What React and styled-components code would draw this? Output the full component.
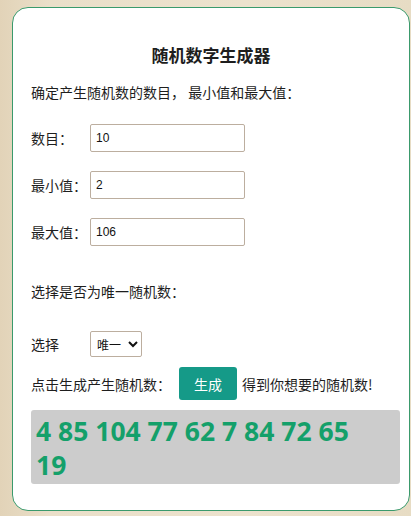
import React, { useState } from "react";
import styled, { createGlobalStyle } from "styled-components";

const Global = createGlobalStyle`
  html, body {
    margin: 0;
    padding: 0;
  }
  body {
    background: linear-gradient(90deg, #e2d3b8 0%, #eadfc9 12%, #ece2cd 60%, #e7dcc4 100%);
    font-family: "Noto Sans CJK SC", "Noto Sans", sans-serif;
    color: #1e1e1e;
    min-height: 516px;
  }
`;

const Page = styled.div`
  padding: 7px 1px 5px 12px;
`;

const Card = styled.div`
  box-sizing: border-box;
  width: 398px;
  height: 504px;
  background: #fff;
  border: 1px solid #3a9a6c;
  border-radius: 16px;
  padding: 35px 18px 0;
`;

const Title = styled.h2`
  margin: 0;
  font-size: 17px;
  line-height: 24px;
  font-weight: 700;
  text-align: center;
`;

const Text = styled.p`
  margin: ${(p) => p.$top || 0}px 0 0;
  font-size: 14px;
  line-height: 20px;
`;

const Row = styled.div`
  display: flex;
  align-items: center;
  margin-top: ${(p) => p.$top}px;
  font-size: 14px;
  white-space: nowrap;
`;

const Label = styled.span`
  width: 59px;
  flex: none;
`;

const Input = styled.input`
  box-sizing: border-box;
  width: 155px;
  height: 28px;
  border: 1px solid #bcae9f;
  border-radius: 2px;
  padding: 0 5px;
  font-family: "Liberation Sans", Arial, sans-serif;
  font-size: 12px;
  color: #111;
  outline: none;
`;

const Select = styled.select`
  box-sizing: border-box;
  width: 52px;
  height: 26px;
  border: 1px solid #bcae9f;
  border-radius: 2px;
  padding: 0 2px;
  font-family: "Noto Sans CJK SC", sans-serif;
  font-size: 12px;
  background: #fff;
  color: #111;
`;

const Button = styled.button`
  width: 58px;
  height: 33px;
  margin: 0 5px 0 8px;
  border: none;
  border-radius: 3px;
  background: #159a88;
  color: #fff;
  font-family: "Noto Sans CJK SC", sans-serif;
  font-size: 14px;
  cursor: pointer;
`;

const Result = styled.div`
  box-sizing: border-box;
  margin-top: 10px;
  width: 369px;
  height: 74px;
  padding: 4px 24px 0 5px;
  background: #cccccc;
  border-radius: 3px;
  color: #14a06a;
  font-family: "Noto Sans", "Open Sans", sans-serif;
  font-weight: 700;
  font-size: 26.5px;
  line-height: 34px;
`;

const fields = [
  { label: "数目：", value: "10" },
  { label: "最小值：", value: "2" },
  { label: "最大值：", value: "106" },
];

export default function App() {
  const [nums] = useState([4, 85, 104, 77, 62, 7, 84, 72, 65, 19]);
  return (
    <>
      <Global />
      <Page>
        <Card>
          <Title>随机数字生成器</Title>
          <Text $top={15}>确定产生随机数的数目， 最小值和最大值：</Text>
          {fields.map((f, i) => (
            <Row key={f.label} $top={i === 0 ? 22 : 19}>
              <Label>{f.label}</Label>
              <Input defaultValue={f.value} />
            </Row>
          ))}
          <Text $top={35}>选择是否为唯一随机数：</Text>
          <Row $top={30}>
            <Label>选择</Label>
            <Select defaultValue="unique">
              <option value="unique">唯一</option>
              <option value="repeat">可重复</option>
            </Select>
          </Row>
          <Row $top={10}>
            <span>点击生成产生随机数：</span>
            <Button>生成</Button>
            <span>得到你想要的随机数!</span>
          </Row>
          <Result>{nums.join(" ")}</Result>
        </Card>
      </Page>
    </>
  );
}
